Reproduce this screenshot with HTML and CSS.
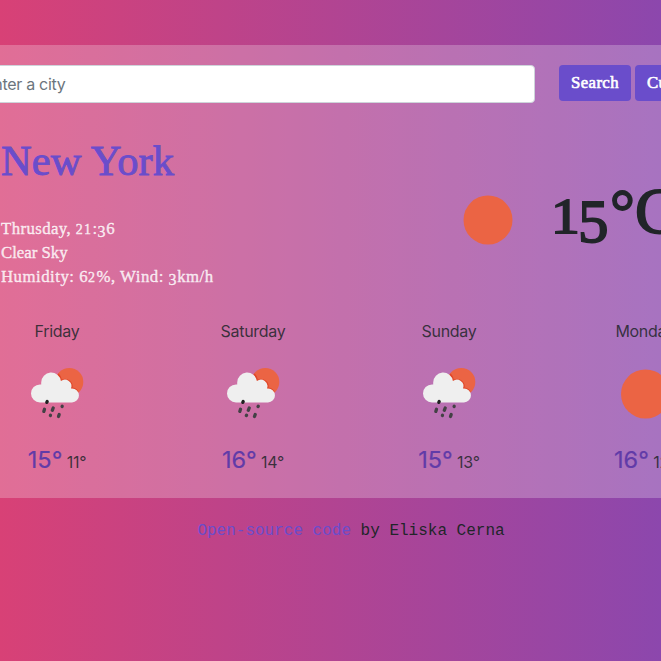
FILE: index.html
```html
<!DOCTYPE html>
<html lang="en">
<head>
<meta charset="utf-8">
<title>Weather</title>
<link rel="stylesheet" href="styles.css">
</head>
<body>
<svg class="defs" aria-hidden="true">
  <symbol id="sun" viewBox="0 0 50 50"><circle cx="25" cy="25" r="24.5" fill="#eb6444"/></symbol>
  <symbol id="rain" viewBox="0 0 54 52">
    <circle cx="39.300" cy="15" r="14" fill="#eb6444"/>
    <path d="M28 7.200a10 10 0 0 1 3 7.300M31 14.300a6.700 6.700 0 0 1 10.500 7.200a7.200 7.200 0 0 1 6.300 3.500" fill="none" stroke="#e04628" stroke-width="1.800"/>
    <path d="M10 35.400a9 9 0 0 1 0-18h1.200v-2a9.900 9.900 0 0 1 19.700-1.300a6.500 6.500 0 0 1 10.100 7.400h1a6.950 6.950 0 0 1 0 13.900z" fill="#efefef"/>
    <g fill="none" stroke="#434145" stroke-width="3.300" stroke-linecap="round">
      <path d="M17.200 34.500l-.4.900" stroke="#202020"/>
      <path d="M14.500 42.300l-.7 2.100M23.200 41l-.9 2.300M32.200 39.300l-.1.200M20.500 48.300l-.1.200M29.200 47.500l-.7 2"/>
    </g>
  </symbol>
</svg>
<div class="page">
  <main class="panel">
    <form class="search">
      <div class="field"><input class="city-input" type="text" placeholder="Enter a city"></div>
      <div class="actions"><button class="button" type="button">Search</button><button class="button" type="button">Current</button></div>
    </form>
    <section class="current">
      <div class="summary">
        <h1 class="city">New York</h1>
        <ul class="details">
          <li class="when">Thrusday, <span class="fig">21</span>:<span class="fig low">3</span>6</li>
          <li class="sky">Clear Sky</li>
          <li class="air">Humidity: 6<span class="fig">2</span>%, Wind: <span class="fig low">3</span>km/h</li>
        </ul>
      </div>
      <div class="now">
        <svg class="now-icon"><use href="#sun"/></svg>
        <div class="temperature"><span class="one">1</span><span class="five">5</span><span class="degree">°</span><span class="unit">C</span></div>
      </div>
    </section>
    <section class="forecast">
      <div class="day"><div class="name">Friday</div><svg class="icon"><use href="#rain"/></svg><div class="range"><span class="high">15°</span> <span class="lowest">11°</span></div></div>
      <div class="day"><div class="name">Saturday</div><svg class="icon"><use href="#rain"/></svg><div class="range"><span class="high">16°</span> <span class="lowest">14°</span></div></div>
      <div class="day"><div class="name">Sunday</div><svg class="icon"><use href="#rain"/></svg><div class="range"><span class="high">15°</span> <span class="lowest">13°</span></div></div>
      <div class="day"><div class="name">Monday</div><svg class="icon sunny"><use href="#sun"/></svg><div class="range"><span class="high">16°</span> <span class="lowest">12°</span></div></div>
    </section>
  </main>
  <footer class="credit"><a class="link">Open-source code</a> by Eliska Cerna</footer>
</div>
</body>
</html>
```
FILE: styles.css
```css
* { box-sizing: border-box; }
html, body { height: 100%; }
body {
  margin: 0;
  overflow: hidden;
  color: #212529;
  font: 16px/24px Inter, "Liberation Sans", sans-serif;
  background: linear-gradient(90deg, #d84176 0, #8c47ad 661px);
}
.defs { display: block; width: 0; height: 0; }
.page { width: 784px; margin-left: -41px; padding-top: 45px; }
.panel { height: 453px; padding-top: 20px; background: rgba(255, 255, 255, .24); }
.search { display: flex; height: 38px; }
.field { flex: none; width: 588px; padding: 0 12px; }
.city-input {
  display: block;
  width: 100%;
  height: 38px;
  padding: 6px 12px;
  border: 1px solid #ced4da;
  border-radius: 4px;
  background: #fff;
  font: 16px/24px Inter, sans-serif;
  letter-spacing: -.3px;
}
.city-input::placeholder { color: #6c757d; opacity: 1; }
.actions { display: flex; gap: 4px; padding-left: 12px; }
.button {
  flex: none;
  width: 72px;
  height: 36px;
  padding: 0 0 1px;
  border: 0;
  border-radius: 4px;
  color: #fff;
  background: #6a4dcb;
  font: 16.8px/24px "Liberation Serif", serif;
  -webkit-text-stroke: .6px;
  letter-spacing: .35px;
}
.button + .button { width: 140px; padding-left: 12px; text-align: left; }
.current { display: flex; height: 186px; padding-left: 42px; font-family: "Liberation Serif", serif; }
.summary { width: 462px; padding-top: 34px; }
.city {
  margin: 0;
  height: 48px;
  color: #6a4dcb;
  font-size: 42.500px;
  line-height: 48px;
  font-weight: 400;
  letter-spacing: .1px;
  -webkit-text-stroke: .9px;
}
.details {
  margin: 32px 0 0;
  padding: 0;
  list-style: none;
  color: rgba(255, 255, 255, .8);
  font-size: 16.8px;
  letter-spacing: .5px;
  -webkit-text-stroke: .4px;
}
.details li { height: 24px; white-space: nowrap; }
.when { letter-spacing: .4px; }
.sky { letter-spacing: 0; }
.fig { font-size: 14px; line-height: 1; letter-spacing: 1.4px; }
.fig.low { font-size: 16px; vertical-align: -3px; letter-spacing: .6px; }
.now { display: flex; padding-top: 92px; }
.now-icon { flex: none; width: 50px; height: 50px; }
.temperature {
  display: flex;
  align-items: baseline;
  height: 70px;
  margin: -19px 0 0 38px;
  font-size: 66px;
  line-height: 70px;
  -webkit-text-stroke: 1.8px;
}
.one { width: 27px; font-size: 50px; transform: scaleX(1.15); transform-origin: left; }
.five { width: 32px; font-size: 61px; line-height: 1; transform: translateY(9px); }
.degree { width: 25px; font-size: 62px; transform: translateY(-1px); }
.unit { font-size: 65px; }
.forecast { display: grid; grid-template-columns: repeat(4, 196px); padding-top: 30px; text-align: center; }
.day { display: flex; flex-direction: column; align-items: center; }
.name { height: 24px; letter-spacing: -.3px; color: rgba(33, 37, 41, .85); }
.icon { width: 54px; height: 52px; margin-top: 24px; }
.icon.sunny { width: 50px; height: 50px; margin: 26px 0 0; transform: translateX(.5px); }
.range { height: 36px; margin-top: 22px; line-height: 38px; letter-spacing: -.25px; color: rgba(33, 37, 41, .85); }
.high { color: #613ba8; font-size: 23.500px; letter-spacing: 0; -webkit-text-stroke: .2px; }
.credit { padding-top: 21px; text-align: center; font: 16px/24px "Liberation Mono", monospace; }
.link { color: #6a4dcb; }
```
